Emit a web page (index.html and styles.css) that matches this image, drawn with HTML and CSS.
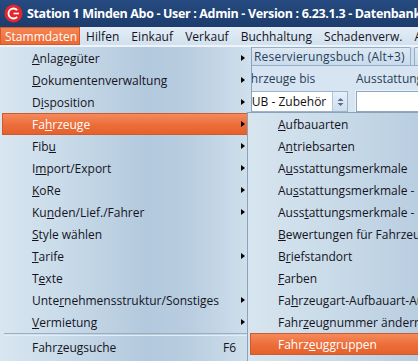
FILE: index.html
```html
<!DOCTYPE html>
<html lang="de">
<head>
<meta charset="utf-8">
<title>Station 1 Minden Abo</title>
<link rel="stylesheet" href="styles.css">
</head>
<body>
<div class="window">
  <header class="titlebar">
    <svg class="logo" width="19" height="19" viewBox="0 0 19 19">
      <circle cx="9.5" cy="9.5" r="9" fill="#e3262c"/>
      <path d="M13.2 6.2 A5 5 0 1 0 13.2 12.8" fill="none" stroke="#fff" stroke-width="1.8"/>
      <path d="M9.5 9.5 H15" stroke="#fff" stroke-width="1.6"/>
    </svg>
    <span class="title">Station 1 Minden Abo - User : Admin - Version : 6.23.1.3 - Datenbank : c</span>
  </header>
  <nav class="menubar">
    <span class="mb active">Stammdaten</span>
    <span class="mb">Hilfen</span>
    <span class="mb">Einkauf</span>
    <span class="mb">Verkauf</span>
    <span class="mb">Buchhaltung</span>
    <span class="mb">Schadenverw.</span>
    <span class="mb">Al</span>
  </nav>
  <main class="workspace">
    <div class="tabs">
      <div class="tab">Reservierungsbuch (Alt+3)</div>
      <div class="tab">Stationsübersicht</div>
    </div>
    <div class="form">
      <label class="lbl">Fahrzeuge bis</label>
      <label class="lbl">Ausstattung</label>
      <div class="combo">
        <span class="combo-text">ZUB - Zubehör</span>
        <span class="spin">
          <svg width="9" height="12" viewBox="0 0 9 12"><path d="M4.5 2 L7.5 5 H1.5 Z M4.5 10 L7.5 7 H1.5 Z" fill="#4f6f95"/></svg>
        </span>
      </div>
      <div class="field"></div>
    </div>
  </main>

  <div class="menu main-menu">
    <div class="item"><span class="label"><u>A</u>nlagegüter</span><i class="arrow"></i></div>
    <div class="item"><span class="label"><u>D</u>okumentenverwaltung</span><i class="arrow"></i></div>
    <div class="item"><span class="label">D<u>i</u>sposition</span><i class="arrow"></i></div>
    <div class="item hot"><span class="label">Fa<u>h</u>rzeuge</span><i class="arrow"></i></div>
    <div class="item"><span class="label">Fib<u>u</u></span><i class="arrow"></i></div>
    <div class="item"><span class="label">I<u>m</u>port/Export</span><i class="arrow"></i></div>
    <div class="item"><span class="label"><u>K</u>oRe</span><i class="arrow"></i></div>
    <div class="item"><span class="label">Ku<u>n</u>den/Lief./Fahrer</span><i class="arrow"></i></div>
    <div class="item"><span class="label"><u>S</u>tyle wählen</span></div>
    <div class="item"><span class="label"><u>T</u>arife</span><i class="arrow"></i></div>
    <div class="item"><span class="label">T<u>e</u>xte</span></div>
    <div class="item"><span class="label">Unte<u>r</u>nehmensstruktur/Sonstiges</span><i class="arrow"></i></div>
    <div class="item"><span class="label"><u>V</u>ermietung</span><i class="arrow"></i></div>
    <div class="sep"></div>
    <div class="item"><span class="label">Fahr<u>z</u>eugsuche</span><span class="key">F6</span></div>
  </div>

  <div class="menu sub-menu">
    <div class="item"><span class="label"><u>A</u>ufbauarten</span></div>
    <div class="item"><span class="label">A<u>n</u>triebsarten</span></div>
    <div class="item"><span class="label">A<u>u</u>sstattungsmerkmale</span></div>
    <div class="item"><span class="label">Au<u>s</u>stattungsmerkmale - Bilder</span></div>
    <div class="item"><span class="label">Auss<u>t</u>attungsmerkmale - Details</span></div>
    <div class="item"><span class="label"><u>B</u>ewertungen für Fahrzeuge</span></div>
    <div class="item"><span class="label">B<u>r</u>iefstandort</span></div>
    <div class="item"><span class="label"><u>F</u>arben</span></div>
    <div class="item"><span class="label">Fa<u>h</u>rzeugart-Aufbauart-Ausstattung</span></div>
    <div class="item"><span class="label">Fahr<u>z</u>eugnummer ändern</span></div>
    <div class="item hot"><span class="label">Fahrz<u>e</u>uggruppen</span></div>
  </div>
</div>
</body>
</html>
```

FILE: styles.css
```css
* { box-sizing: border-box; }
html, body { margin: 0; padding: 0; }
body {
  width: 418px;
  height: 361px;
  overflow: hidden;
  font-family: "Open Sans", "Noto Sans", "DejaVu Sans", sans-serif;
  font-size: 12px;
  color: #15141e;
  background: #d3e2ef;
}
.window {
  position: relative;
  width: 418px;
  height: 361px;
  overflow: hidden;
  display: flex;
  flex-direction: column;
}

/* title bar */
.titlebar {
  height: 27px;
  flex: none;
  display: flex;
  align-items: center;
  gap: 4px;
  padding-left: 4px;
  background: linear-gradient(#264b80, #1c3c6c);
  white-space: nowrap;
  overflow: hidden;
}
.logo { flex: none; }
.title {
  flex: none;
  color: #fff;
  font-weight: 700;
  font-size: 12.5px;
  letter-spacing: -0.35px;
}

/* menubar */
.menubar {
  height: 20px;
  flex: none;
  display: flex;
  align-items: stretch;
  background: linear-gradient(#e3edf7, #d2e1ef);
  border-bottom: 2px solid #eef4fa;
  white-space: nowrap;
  overflow: hidden;
}
.mb {
  flex: none;
  display: flex;
  align-items: center;
  padding: 0 6px;
  letter-spacing: 0.05px;
}
.mb.active {
  width: 80px;
  background: linear-gradient(#f58654, #ec6a35);
  border: 1px solid #d45a26;
  color: #fff;
  padding: 0 0 0 4px;
  letter-spacing: 0;
}

/* workspace behind the menus */
.workspace {
  flex: 1;
  background: #d6e5f1;
}
.tabs {
  height: 19px;
  display: flex;
  padding-left: 250px;
  border-bottom: 1px solid #93aecb;
  background: #cfdfed;
  white-space: nowrap;
  overflow: hidden;
}
.tab {
  flex: none;
  display: flex;
  align-items: center;
  padding: 0 5px 0 3px;
  background: linear-gradient(#dde9f4, #c9dbeb);
  border: 1px solid #93aecb;
  border-bottom: none;
  border-radius: 2px 2px 0 0;
  color: #2a3f5c;
  margin-right: 3px;
  letter-spacing: 0.2px;
}
.form {
  display: grid;
  grid-template-columns: 110px 80px;
  column-gap: 8px;
  row-gap: 4px;
  padding: 3px 0 0 238px;
  white-space: nowrap;
}
.lbl {
  color: #2b3d57;
  height: 18px;
  display: flex;
  align-items: center;
}
.combo {
  height: 21px;
  display: flex;
  background: #fff;
  border: 1px solid #9db3ca;
  margin-left: 3px;
}
.combo-text {
  flex: 1;
  display: flex;
  align-items: center;
  padding-left: 3px;
  color: #111;
}
.spin {
  width: 15px;
  display: flex;
  align-items: center;
  justify-content: center;
  background: linear-gradient(#e7eff7, #cfdeec);
  border-left: 1px solid #b2c5d8;
}
.field {
  height: 21px;
  width: 80px;
  background: #fff;
  border: 1px solid #8ea8c3;
  box-shadow: 0 0 0 1px #e9f0f7;
}

/* dropdown menus (overlay) */
.menu {
  position: absolute;
  border: 1px solid #8aa3bb;
  white-space: nowrap;
  color: #15141e;
}
.main-menu {
  left: 0;
  top: 47px;
  width: 252px;
  height: 330px;
  border-left: none;
  border-top: none;
  background: linear-gradient(90deg, #d8e6f0 0%, #c9dbe9 25%, #b3c9dd 58%, #b8cde0 75%, #d0e0ec 100%);
}
.sub-menu {
  left: 247px;
  top: 112px;
  width: 260px;
  height: 260px;
  border-right: none;
  background: linear-gradient(90deg, #d7e5ef 0%, #c8dae8 35%, #b7cce0 70%, #b4cadd 100%);
}
.item {
  height: 22px;
  display: flex;
  align-items: center;
  padding-left: 32px;
  padding-right: 6px;
}
.sub-menu .item { padding-left: 30px; }
.label { flex: 1; }
u { text-decoration: underline; text-underline-offset: 1px; text-decoration-thickness: 1px; }
.arrow {
  flex: none;
  width: 0;
  height: 0;
  border-left: 4px solid #000;
  border-top: 3.5px solid transparent;
  border-bottom: 3.5px solid transparent;
}
.key { padding-right: 9px; }
.item.hot {
  background: linear-gradient(#f48a5c, #ec6d39 55%, #e6612c);
  border: 1px solid #cf5a2c;
  color: #fff;
  margin: 0 2px 0 2px;
  padding-left: 29px;
  padding-right: 3px;
}
.sub-menu .item.hot { padding-left: 27px; }
.sep {
  height: 3px;
  margin: 0 4px;
  border-top: 1px solid #98b0c6;
  border-bottom: 1px solid #e3edf5;
}
```
